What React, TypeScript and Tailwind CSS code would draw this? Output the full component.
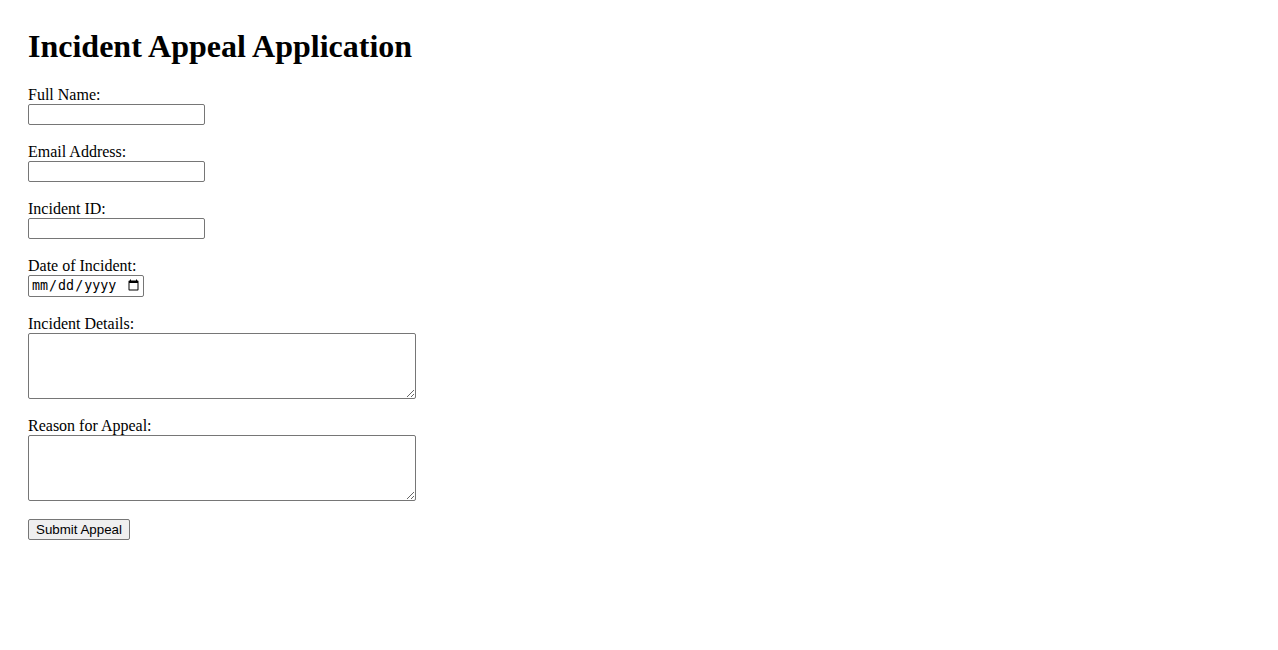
import * as React from "react"

const fields = [
  { id: "fullName", label: "Full Name:", type: "text" },
  { id: "email", label: "Email Address:", type: "email" },
  { id: "incidentId", label: "Incident ID:", type: "text" },
]

const inputBase =
  "block border border-[#767676] rounded-[2px] bg-white px-[2px] text-[13.33px] font-['Liberation_Sans',Arial,sans-serif] text-black outline-none"

export default function App() {
  return (
    <div className="min-h-screen bg-white px-[28px] pt-[28px] font-['Liberation_Serif','Times_New_Roman',serif] text-black">
      <h1 className="text-[32px] font-bold leading-[37px] mb-[21px]">Incident Appeal Application</h1>
      <form className="flex flex-col items-start" onSubmit={(e) => e.preventDefault()}>
        {fields.map((f) => (
          <React.Fragment key={f.id}>
            <label htmlFor={f.id} className="block text-[16px] leading-[18px]">
              {f.label}
            </label>
            <input id={f.id} type={f.type} className={`${inputBase} w-[177px] h-[21px] mb-[18px]`} />
          </React.Fragment>
        ))}

        <label htmlFor="date" className="block text-[16px] leading-[18px]">
          Date of Incident:
        </label>
        <input
          id="date"
          type="date"
          className="block w-[116px] h-[22px] mb-[18px] border border-[#767676] rounded-[2px] bg-white pl-[2px] pr-[1px] text-[13.33px] font-['DejaVu_Sans_Mono','Liberation_Mono',monospace] text-black outline-none"
        />

        <label htmlFor="details" className="block text-[16px] leading-[18px]">
          Incident Details:
        </label>
        <textarea id="details" className={`${inputBase} w-[388px] h-[66px] mb-[18px]`} />

        <label htmlFor="reason" className="block text-[16px] leading-[18px]">
          Reason for Appeal:
        </label>
        <textarea id="reason" className={`${inputBase} w-[388px] h-[66px] mb-[18px]`} />

        <button
          type="submit"
          className="w-[102px] h-[21px] border border-[#767676] rounded-[2px] bg-[#efefef] text-[13.33px] leading-none font-['Liberation_Sans',Arial,sans-serif] text-black"
        >
          Submit Appeal
        </button>
      </form>
    </div>
  )
}
